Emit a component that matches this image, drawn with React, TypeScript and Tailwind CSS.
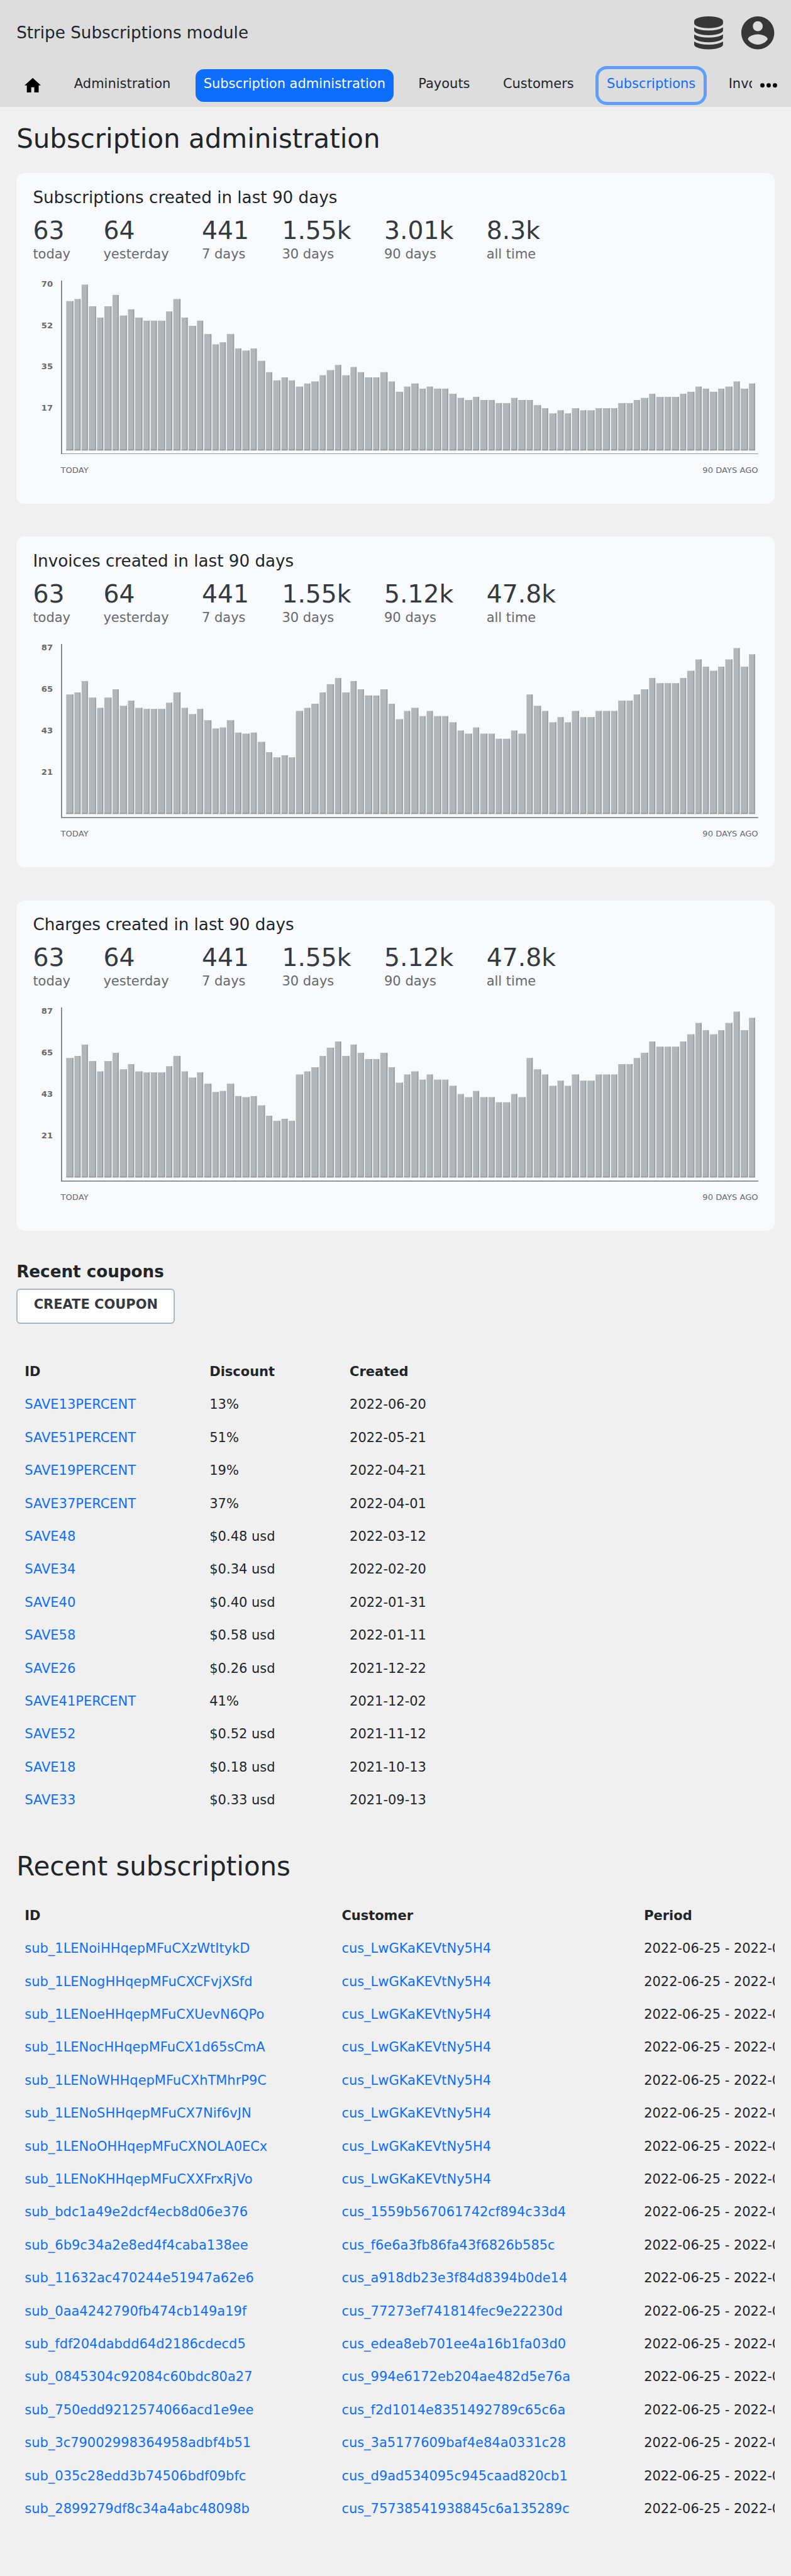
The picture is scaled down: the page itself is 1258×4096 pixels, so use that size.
import React from "react";

const CREATED_SUBSCRIPTIONS = [
  145, 147, 161, 140, 129, 140, 151, 131, 137, 129, 126, 126, 126, 135, 147, 129, 121, 126, 113, 103,
  105, 113, 99, 97, 99, 87, 76, 68, 71, 68, 62, 65, 67, 73, 78, 83, 73, 81, 76, 71, 71, 76, 67, 57, 62,
  65, 60, 62, 60, 60, 55, 51, 49, 52, 49, 49, 46, 46, 51, 49, 49, 44, 41, 36, 39, 36, 41, 39, 39, 41, 41,
  41, 46, 46, 49, 51, 55, 52, 52, 52, 55, 57, 62, 60, 57, 60, 62, 67, 60, 65,
];

const CREATED_INVOICES = [
  116, 118, 129, 113, 103, 113, 121, 105, 110, 103, 102, 102, 102, 108, 118, 103, 97, 102, 91, 83, 84,
  91, 79, 78, 79, 70, 60, 55, 57, 55, 100, 103, 107, 118, 126, 132, 118, 129, 121, 115, 115, 121, 107, 92,
  100, 103, 95, 100, 95, 95, 89, 81, 78, 84, 78, 78, 73, 73, 81, 78, 116, 105, 100, 89, 94, 89, 100, 94,
  94, 100, 100, 100, 110, 110, 116, 121, 132, 127, 127, 127, 132, 139, 150, 143, 139, 143, 150, 161, 143,
  155,
];

type Stat = [value: string, label: string];

const stats = (ninety: string, all: string): Stat[] => [
  ["63", "today"],
  ["64", "yesterday"],
  ["441", "7 days"],
  ["1.55k", "30 days"],
  [ninety, "90 days"],
  [all, "all time"],
];

const CARDS = [
  {
    title: "Subscriptions created in last 90 days",
    stats: stats("3.01k", "8.3k"),
    ticks: ["70", "52", "35", "17"],
    bars: CREATED_SUBSCRIPTIONS,
  },
  {
    title: "Invoices created in last 90 days",
    stats: stats("5.12k", "47.8k"),
    ticks: ["87", "65", "43", "21"],
    bars: CREATED_INVOICES,
  },
  {
    title: "Charges created in last 90 days",
    stats: stats("5.12k", "47.8k"),
    ticks: ["87", "65", "43", "21"],
    bars: CREATED_INVOICES,
  },
];

const COUPONS = [
  ["SAVE13PERCENT", "13%", "2022-06-20"],
  ["SAVE51PERCENT", "51%", "2022-05-21"],
  ["SAVE19PERCENT", "19%", "2022-04-21"],
  ["SAVE37PERCENT", "37%", "2022-04-01"],
  ["SAVE48", "$0.48 usd", "2022-03-12"],
  ["SAVE34", "$0.34 usd", "2022-02-20"],
  ["SAVE40", "$0.40 usd", "2022-01-31"],
  ["SAVE58", "$0.58 usd", "2022-01-11"],
  ["SAVE26", "$0.26 usd", "2021-12-22"],
  ["SAVE41PERCENT", "41%", "2021-12-02"],
  ["SAVE52", "$0.52 usd", "2021-11-12"],
  ["SAVE18", "$0.18 usd", "2021-10-13"],
  ["SAVE33", "$0.33 usd", "2021-09-13"],
];

const SUBSCRIPTIONS = [
  ["sub_1LENoiHHqepMFuCXzWtItykD", "cus_LwGKaKEVtNy5H4"],
  ["sub_1LENogHHqepMFuCXCFvjXSfd", "cus_LwGKaKEVtNy5H4"],
  ["sub_1LENoeHHqepMFuCXUevN6QPo", "cus_LwGKaKEVtNy5H4"],
  ["sub_1LENocHHqepMFuCX1d65sCmA", "cus_LwGKaKEVtNy5H4"],
  ["sub_1LENoWHHqepMFuCXhTMhrP9C", "cus_LwGKaKEVtNy5H4"],
  ["sub_1LENoSHHqepMFuCX7Nif6vJN", "cus_LwGKaKEVtNy5H4"],
  ["sub_1LENoOHHqepMFuCXNOLA0ECx", "cus_LwGKaKEVtNy5H4"],
  ["sub_1LENoKHHqepMFuCXXFrxRjVo", "cus_LwGKaKEVtNy5H4"],
  ["sub_bdc1a49e2dcf4ecb8d06e376", "cus_1559b567061742cf894c33d4"],
  ["sub_6b9c34a2e8ed4f4caba138ee", "cus_f6e6a3fb86fa43f6826b585c"],
  ["sub_11632ac470244e51947a62e6", "cus_a918db23e3f84d8394b0de14"],
  ["sub_0aa4242790fb474cb149a19f", "cus_77273ef741814fec9e22230d"],
  ["sub_fdf204dabdd64d2186cdecd5", "cus_edea8eb701ee4a16b1fa03d0"],
  ["sub_0845304c92084c60bdc80a27", "cus_994e6172eb204ae482d5e76a"],
  ["sub_750edd9212574066acd1e9ee", "cus_f2d1014e8351492789c65c6a"],
  ["sub_3c79002998364958adbf4b51", "cus_3a5177609baf4e84a0331c28"],
  ["sub_035c28edd3b74506bdf09bfc", "cus_d9ad534095c945caad820cb1"],
  ["sub_2899279df8c34a4abc48098b", "cus_75738541938845c6a135289c"],
];

function DatabaseIcon() {
  return (
    <svg viewBox="0 0 1536 1792" preserveAspectRatio="none" fill="#373737" className="h-[52.4px] w-[45.9px]">
      <path d="M768 768q237 0 443-43t325-127v170q0 69-103 128t-280 93.5-385 34.5-385-34.5-280-93.5-103-128v-170q119 84 325 127t443 43zm0 768q237 0 443-43t325-127v170q0 69-103 128t-280 93.5-385 34.5-385-34.5-280-93.5-103-128v-170q119 84 325 127t443 43zm0-384q237 0 443-43t325-127v170q0 69-103 128t-280 93.5-385 34.5-385-34.5-280-93.5-103-128v-170q119 84 325 127t443 43zm0-1152q208 0 385 34.5t280 93.5 103 128v128q0 69-103 128t-280 93.5-385 34.5-385-34.5-280-93.5-103-128v-128q0-69 103-128t280-93.5 385-34.5z" />
    </svg>
  );
}

function AccountIcon() {
  return (
    <svg viewBox="2 2 20 20" fill="#373737" className="size-[52.4px]">
      <path d="M12 2C6.48 2 2 6.48 2 12s4.48 10 10 10 10-4.48 10-10S17.52 2 12 2zm0 3c1.66 0 3 1.34 3 3s-1.34 3-3 3-3-1.34-3-3 1.34-3 3-3zm0 14.2c-2.5 0-4.71-1.28-6-3.22.03-1.99 4-3.08 6-3.08 1.99 0 5.97 1.09 6 3.08-1.29 1.94-3.5 3.22-6 3.22z" />
    </svg>
  );
}

function HomeIcon() {
  return (
    <svg viewBox="0 0 32 28" className="ml-[39.3px] h-[22.9px] w-[26.2px] shrink-0">
      <path d="M16 0L32 14.5H27.5V28H19V18H13V28H4.5V14.5H0Z" />
    </svg>
  );
}

function NavItem({ label, state = "idle" }: { label: string; state?: "idle" | "active" | "focus" }) {
  const look = {
    idle: "text-[#212529]",
    active: "bg-[#0d6efd] text-white",
    focus: "text-[#0d6efd] ring-[5px] ring-[#5e9eff]",
  }[state];
  return (
    <a className={`flex h-[52.4px] shrink-0 items-center rounded-[13.1px] px-[13.1px] pb-[3.6px] text-[20.97px] ${look}`}>
      {label}
    </a>
  );
}

function Header() {
  return (
    <header className="h-[170.4px] bg-[#dddddd] pt-[26.2px]">
      <div className="flex h-[52.4px] items-center px-[26.2px]">
        <div className="flex-1 text-[26.2px] text-[#212529]">Stripe Subscriptions module</div>
        <div className="flex gap-[29.6px]">
          <DatabaseIcon />
          <AccountIcon />
        </div>
      </div>
      <nav className="mt-[24.6px] flex items-center">
        <HomeIcon />
        <div className="ml-[26.2px] flex w-[1104px] gap-[26.2px] overflow-hidden py-[6.5px] pl-[13.1px]">
          <NavItem label="Administration" />
          <NavItem label="Subscription administration" state="active" />
          <NavItem label="Payouts" />
          <NavItem label="Customers" />
          <NavItem label="Subscriptions" state="focus" />
          <NavItem label="Invoices" />
        </div>
        <svg viewBox="0 0 33 9" className="ml-[12.9px] h-[7.4px] w-[27px] shrink-0">
          <circle cx="4.3" cy="4.5" r="4.2" />
          <circle cx="16.5" cy="4.5" r="4.2" />
          <circle cx="28.7" cy="4.5" r="4.2" />
        </svg>
      </nav>
    </header>
  );
}

function BarChart({ bars }: { bars: number[] }) {
  return (
    <svg viewBox="0 0 1354 338" className="h-full w-[1109px] shrink-0">
      <path d="M0 0H2V336H1354V338H0Z" fill="#6c757d" />
      {bars.map((units, i) => {
        const start = 5.1 + (i * 670) / 90;
        const left = 2 * Math.round(start);
        const width = 2 * Math.round(start + 6.444) - left;
        const height = units * 2;
        return (
          <g key={i}>
            <rect x={left} y={330 - height} width={width} height={height} fill="#b0b6ba" />
            <path
              d={`M${left + width - 2} ${330 - height}h2V330H${left}v-2H${left + width - 2}Z`}
              fill="#979b9f"
            />
          </g>
        );
      })}
    </svg>
  );
}

function ChartCard({ title, stats, ticks, bars }: (typeof CARDS)[number]) {
  return (
    <section className="h-[525.8px] rounded-[13.1px] bg-[#f8fafc] px-[26.2px] pt-[18.8px]">
      <h2 className="flex h-[39.3px] items-center pt-[1.4px] text-[26.2px] text-[#212529]">{title}</h2>
      <div className="mt-[10.6px] flex gap-[52.4px]">
        {stats.map(([value, label]) => (
          <div key={label}>
            <div className="h-[45.9px] text-[39.3px] leading-[45.9px] text-[#343a40]">{value}</div>
            <div className="h-[29.2px] text-[20.97px] leading-[29.2px] text-[#66696e]">{label}</div>
          </div>
        ))}
      </div>
      <div className="mt-[26.7px] flex h-[276.8px]">
        <div className="w-[44.2px] shrink-0 pr-[12.5px] text-right text-[13.1px] leading-[11.1px] font-bold text-[#66696e]">
          {ticks.map((tick) => (
            <div key={tick} className="h-[65.9px]">
              {tick}
            </div>
          ))}
        </div>
        <BarChart bars={bars} />
      </div>
      <div className="flex h-[50.8px] items-center justify-between pl-[44.2px] text-[13.1px] text-[#66696e]">
        <span>TODAY</span>
        <span>90 DAYS AGO</span>
      </div>
    </section>
  );
}

export default function App() {
  return (
    <div className="h-[4096px] w-[1258px] overflow-hidden bg-[#f0f0f0] font-['DejaVu_Sans',sans-serif] whitespace-nowrap text-[#212529]">
      <Header />
      <main className="px-[26.2px]">
        <h1 className="flex h-[104.8px] items-center pb-[2px] text-[41.93px]">Subscription administration</h1>
        <div className="flex flex-col gap-[52.4px]">
          {CARDS.map((card) => (
            <ChartCard key={card.title} {...card} />
          ))}
        </div>

        <h2 className="flex h-[91.7px] items-center pt-[39.1px] text-[26.2px] font-bold">Recent coupons</h2>
        <button className="flex h-[55.7px] w-[252.3px] items-center justify-center rounded-[6px] border-2 border-[#a9b7c5] bg-white pb-[3.6px] text-[20.97px] font-bold text-[#343a40]">
          CREATE COUPON
        </button>

        <div className="mt-[50.1px] text-[20.97px]">
          <div className="grid h-[52.416px] grid-cols-[294px_222.8px_1fr] items-center pt-[1.4px] pl-[13.1px] font-bold">
            <span>ID</span>
            <span>Discount</span>
            <span>Created</span>
          </div>
          {COUPONS.map(([id, discount, created]) => (
            <div key={id} className="grid h-[52.416px] grid-cols-[294px_222.8px_1fr] items-center pt-[1.4px] pl-[13.1px]">
              <a className="text-[#0d6efd]">{id}</a>
              <span>{discount}</span>
              <span>{created}</span>
            </div>
          ))}
        </div>

        <h2 className="flex h-[131px] items-center pt-[29.4px] text-[41.93px]">Recent subscriptions</h2>
        <div className="overflow-hidden text-[20.97px]">
          <div className="grid h-[52.416px] grid-cols-[504.1px_480.8px_1fr] items-center pt-[1.4px] pl-[13.1px] font-bold">
            <span>ID</span>
            <span>Customer</span>
            <span>Period</span>
          </div>
          {SUBSCRIPTIONS.map(([id, customer]) => (
            <div key={id} className="grid h-[52.416px] grid-cols-[504.1px_480.8px_1fr] items-center pt-[1.4px] pl-[13.1px]">
              <a className="text-[#0d6efd]">{id}</a>
              <a className="text-[#0d6efd]">{customer}</a>
              <span>2022-06-25 - 2022-07-25</span>
            </div>
          ))}
        </div>
      </main>
    </div>
  );
}
